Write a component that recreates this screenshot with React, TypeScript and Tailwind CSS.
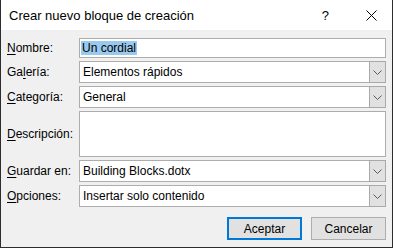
import React from 'react';

const Chevron = () => (
  <svg width="9" height="5" viewBox="0 0 9 5" className="block">
    <path d="M0.5 0.5 L4.5 4.5 L8.5 0.5" fill="none" stroke="#5a5a5a" strokeWidth="1" />
  </svg>
);

// label with access-key underline
const Label = ({ pre = '', u, post }: { pre?: string; u: string; post: string }) => (
  <span className="text-[#000]">
    {pre}
    <span className="underline underline-offset-[2px]">{u}</span>
    {post}
  </span>
);

const Combo = ({ value }: { value: string }) => (
  <div className="flex h-[22px] w-[307px]">
    <div className="flex flex-1 items-center border-y border-l border-[#adadad] bg-white pl-[3px]">
      {value}
    </div>
    <div className="flex w-[17px] items-center justify-center border border-[#a9a9a9] bg-[#e1e1e1]">
      <Chevron />
    </div>
  </div>
);

export default function App() {
  return (
    <div
      className="flex h-[248px] w-[393px] flex-col border-x border-b border-[#2d2d2d] text-[12px] leading-none text-black"
      style={{ fontFamily: '"Liberation Sans", Arial, sans-serif' }}
    >
      {/* title bar */}
      <div className="flex h-[30px] items-center bg-white pl-[8px]">
        <span className="flex-1 text-[13px]">Crear nuevo bloque de creación</span>
        <span className="mr-[37px] text-[13px]">?</span>
        <svg width="11" height="11" viewBox="0 0 11 11" className="mr-[15px]">
          <path d="M0.5 0.5 L10.5 10.5 M10.5 0.5 L0.5 10.5" stroke="#000" strokeWidth="1" />
        </svg>
      </div>

      {/* body */}
      <div className="flex flex-1 flex-col bg-[#f0f0f0] pl-[6px] pr-[6px] pt-[8px]">
        <div className="grid grid-cols-[72px_307px] gap-y-[3px]">
          <div className="flex items-center">
            <Label u="N" post="ombre:" />
          </div>
          <div className="flex h-[20px] items-center border border-[#adadad] bg-white pl-[1px]">
            <span className="bg-[#99c9ef] px-[1px] py-[1px]">Un cordial</span>
          </div>

          <div className="flex items-center">
            <Label pre="Ga" u="l" post="ería:" />
          </div>
          <Combo value="Elementos rápidos" />

          <div className="flex items-center">
            <Label u="C" post="ategoría:" />
          </div>
          <Combo value="General" />

          <div className="flex items-center">
            <Label u="D" post="escripción:" />
          </div>
          <div className="h-[46px] border border-[#adadad] bg-white" />

          <div className="flex items-center">
            <Label u="G" post="uardar en:" />
          </div>
          <Combo value="Building Blocks.dotx" />

          <div className="flex items-center">
            <Label u="O" post="pciones:" />
          </div>
          <Combo value="Insertar solo contenido" />
        </div>

        <div className="mt-[10px] flex justify-end gap-[9px]">
          <button className="flex h-[23px] w-[75px] items-center justify-center border-2 border-[#0078d7] bg-[#e1e1e1]">
            Aceptar
          </button>
          <button className="flex h-[23px] w-[75px] items-center justify-center border border-[#adadad] bg-[#e1e1e1]">
            Cancelar
          </button>
        </div>
      </div>
    </div>
  );
}
